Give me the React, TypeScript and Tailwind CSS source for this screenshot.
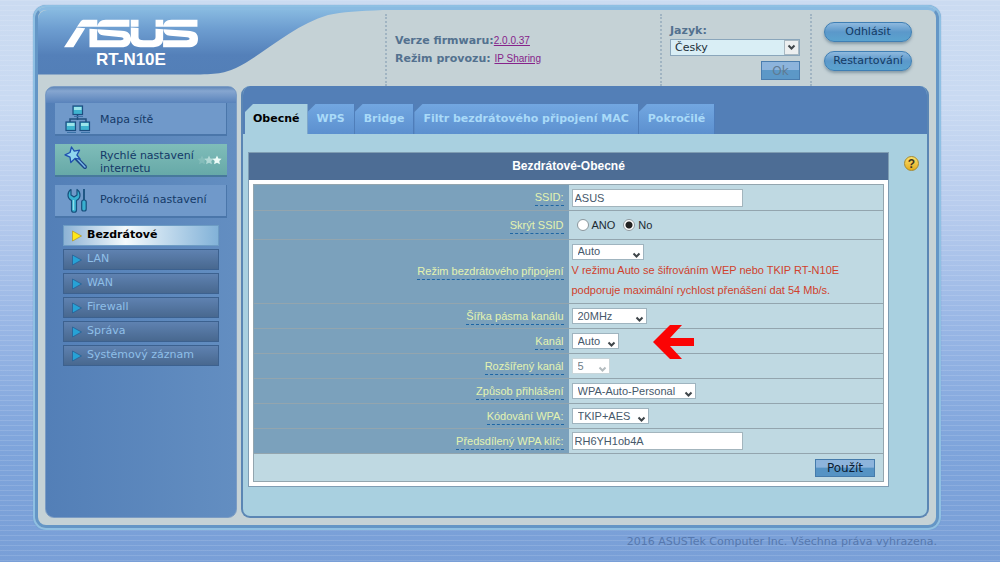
import React, { useState } from "react";
import { SiAsus } from "react-icons/si";

// ─── Data ─────────────────────────────────────────────────────────────────────
const TABS = ["Obecné", "WPS", "Bridge", "Filtr bezdrátového připojení MAC", "Pokročilé"];

const SUBMENU = ["Bezdrátové", "LAN", "WAN", "Firewall", "Správa", "Systémový záznam"];

// ─── Icons ────────────────────────────────────────────────────────────────────
function NetworkIcon() {
  return (
    <svg width="28" height="28" viewBox="0 0 28 28" className="shrink-0" aria-hidden="true">
      <path d="M13.500 10v5M6 18v-4h16v4" fill="none" stroke="#20507f" strokeWidth="1.500" />
      {[[9, 1], [2, 17], [16, 17]].map(([x, y]) => (
        <g key={x}>
          <rect x={x} y={y} width="9.500" height="8.500" fill="#3fb3cf" stroke="#1d4e80" strokeWidth="1.200" />
          <rect x={x + 1} y={y + 1} width="7.500" height="3" fill="#9be4ea" />
          <path d={`M${x + 1} ${y + 10.500}h9`} stroke="#3b73a8" />
        </g>
      ))}
    </svg>
  );
}

function WandIcon() {
  return (
    <svg width="28" height="28" viewBox="0 0 28 28" className="shrink-0" aria-hidden="true">
      <path d="M12 12l9 9" stroke="#1b4588" strokeWidth="4" strokeLinecap="round" />
      <path d="M13 12.500l8 8.500" stroke="#78b9e8" strokeWidth="1.500" strokeLinecap="round" />
      <path
        d="M7.500 1l2.800 4.200 5.200-1-2.600 4.800 3.300 4.200-5.200-.8L6.800 16.500l-.8-5.300L1 8.800 6 6.500z"
        fill="#8fd6ef"
        stroke="#1f50b0"
        strokeWidth="1.300"
        strokeLinejoin="round"
      />
    </svg>
  );
}

function ToolsIcon() {
  return (
    <svg width="28" height="28" viewBox="0 0 28 28" className="shrink-0" aria-hidden="true">
      <path
        d="M7 2.500C4.500 4 4 6 4 8c0 2.500 1.500 4.500 3.500 5.500V23c0 3 5 3 5 0v-9.500C14.500 12.500 16 10.500 16 8c0-2-.8-4-3-5.500V8L10 10 7 8z"
        fill="#38b0d0"
        stroke="#17507d"
        strokeWidth="1.200"
        strokeLinejoin="round"
      />
      <path d="M9.500 13v10" stroke="#90e0ea" strokeWidth="1.400" />
      <path d="M20 2v12" stroke="#17507d" strokeWidth="1.800" />
      <rect x="17.700" y="13" width="4.500" height="11" rx="2" fill="#38b0d0" stroke="#17507d" strokeWidth="1.200" />
    </svg>
  );
}

function Stars() {
  return (
    <svg width="26" height="12" viewBox="0 0 26 12" className="ml-auto shrink-0" aria-hidden="true">
      {[0, 7, 15].map((x, i) => (
        <path
          key={x}
          d={`M${x + 5} 1.500l1.400 2.900 3.200.4-2.300 2.200.6 3.200-2.900-1.500-2.900 1.500.6-3.200L${x + 0.4} 4.800l3.200-.4z`}
          fill="#f2fffb"
          opacity={[0.15, 0.5, 0.95][i]}
        />
      ))}
    </svg>
  );
}

function Chevron({ muted }: { muted?: boolean }) {
  return (
    <svg width="9" height="7" viewBox="0 0 9 7" aria-hidden="true">
      <path
        d="M1.500 1.500l3 3 3-3"
        fill="none"
        stroke={muted ? "#b4bcbf" : "#3f464a"}
        strokeWidth="2"
      />
    </svg>
  );
}

// ─── Form parts ───────────────────────────────────────────────────────────────
interface PickerProps {
  id: string;
  value: string;
  width: string;
  disabled?: boolean;
}

function Picker({ id, value, width, disabled }: PickerProps) {
  return (
    <div className={`relative h-4 ${width}`}>
      <select
        id={id}
        disabled={disabled}
        className="block h-4 w-full appearance-none border border-[#9fb4bf] bg-white pl-[5px] text-[11px] leading-[13px] text-[#46586a] outline-none disabled:border-[#c9d6da] disabled:text-[#6f7d88] disabled:opacity-100"
      >
        <option>{value}</option>
      </select>
      <span className="pointer-events-none absolute right-[3px] bottom-px">
        <Chevron muted={disabled} />
      </span>
    </div>
  );
}

interface RowProps {
  label: string;
  htmlFor?: string;
  height: string;
  children: React.ReactNode;
}

function Row({ label, htmlFor, height, children }: RowProps) {
  return (
    <tr className={`border-b border-[#93a5ae] ${height}`}>
      <th scope="row" className="w-1/2 bg-[#7ba1bc] pr-[5px] text-right align-middle font-normal">
        <label
          htmlFor={htmlFor}
          className="inline-block border-b border-dashed border-[#1f66a3] leading-[15px] text-[#e4f3b0]"
        >
          {label}
        </label>
      </th>
      <td className="bg-[#bfd9e2] pl-[3px] align-middle">{children}</td>
    </tr>
  );
}

// ─── Page sections ────────────────────────────────────────────────────────────
function Header() {
  const pill =
    "block h-5 w-[88px] rounded-full border border-[#3f7fb4] bg-linear-to-b from-[#8fb9de] via-[#5b98ca] to-[#5aa3cf] text-[11px] leading-[16px] text-[#123a63] shadow-[0_2px_3px_rgba(70,100,120,0.5)]";

  return (
    <header className="relative flex h-[76px]">
      <svg
        className="absolute top-0 left-0 rounded-tl-[9px]"
        width="345"
        height="65"
        viewBox="0 0 345 65"
        aria-hidden="true"
      >
        <defs>
          <linearGradient id="swoosh" x1="0" y1="0" x2="0" y2="1">
            <stop offset="0" stopColor="#87b9e0" />
            <stop offset="0.300" stopColor="#6d9dd0" />
            <stop offset="0.700" stopColor="#5480b9" />
            <stop offset="1" stopColor="#537fb7" />
          </linearGradient>
        </defs>
        <path d="M0 0H345C320 1 305 2 290 5C255 15 225 45 198 58C185 64 175 64.500 150 64.500H0z" fill="url(#swoosh)" />
      </svg>
      <div className="relative w-[347px] shrink-0 pt-[9px] pl-[26px] text-white">
        <SiAsus viewBox="0 9.400 24 5.200" preserveAspectRatio="none" className="h-[29px] w-[134px]" />
        <h1 className="ml-8 text-[17px] leading-6 font-bold">RT-N10E</h1>
      </div>
      <div className="mt-1 flex-1 border-l-2 border-dotted border-[#a0b4c2] pt-[18px] pl-2 font-['DejaVu_Sans'] text-[11px] leading-[18px] font-bold text-[#53718f]">
        <p>
          Verze firmwaru:
          <a href="#firmware" className="font-['Liberation_Sans'] text-[10px] font-normal text-[#86228a] underline">
            2.0.0.37
          </a>
        </p>
        <p>
          Režim provozu:{" "}
          <a href="#mode" className="font-['Liberation_Sans'] text-[10px] font-normal text-[#86228a] underline">
            IP Sharing
          </a>
        </p>
      </div>
      <div className="mt-1 w-[150px] shrink-0 border-l-2 border-dotted border-[#a0b4c2] pt-2 pr-[10px] pl-2 font-['DejaVu_Sans']">
        <label htmlFor="lang" className="block text-[11px] leading-[17px] font-bold text-[#53718f]">
          Jazyk:
        </label>
        <div className="relative">
          <select
            id="lang"
            className="block h-[17px] w-full appearance-none border border-[#8aa6bb] bg-[#d9eef5] pl-1 text-[11px] leading-[15px] text-[#1d3038] outline-none"
          >
            <option>Česky</option>
          </select>
          <span className="pointer-events-none absolute top-px right-px flex h-[15px] w-[15px] items-center justify-center border border-[#a9b9c2] bg-[#eceff0]">
            <Chevron />
          </span>
        </div>
        <button
          disabled
          className="mt-[5px] ml-auto block h-[19px] w-[39px] border border-[#4a7dae] bg-linear-to-b from-[#8db4dc] from-45% to-[#5c98c7] to-50% text-[12px] leading-[16px] text-[#5f7b92]"
        >
          Ok
        </button>
      </div>
      <div className="mt-1 w-[126px] shrink-0 space-y-[9px] border-l-2 border-dotted border-[#a0b4c2] pt-2 pl-3 font-['DejaVu_Sans']">
        <button className={pill}>Odhlásit</button>
        <button className={pill}>Restartování</button>
      </div>
    </header>
  );
}

function Sidebar() {
  const [active, setActive] = useState("Bezdrátové");
  const item =
    "flex h-[33px] w-full items-center border-r border-b-2 border-[#4a76aa] bg-[#7099ca] pr-1 pl-[9px] text-left text-[11px] text-[#143968]";

  return (
    <nav className="w-[192px] shrink-0 rounded-[9px] border border-[#7b9cc4] bg-linear-to-r from-[#537fb7] to-[#638ec1] font-['DejaVu_Sans']">
      <div className="h-4 rounded-t-[8px] bg-linear-to-b from-[#6288b9] via-[#86a6d0] via-25% to-[#5983bb]" />
      <div className="mx-[9px] space-y-2">
        <button className={item}>
          <NetworkIcon />
          <span className="ml-2 pt-1">Mapa sítě</span>
        </button>
        <button className="flex h-[33px] w-full items-center border-b-2 border-[#47799c] bg-linear-to-b from-[#7fbdb9] to-[#67a9a8] pr-1 pl-[9px] text-left text-[11px] leading-[13px] text-[#143968]">
          <WandIcon />
          <span className="ml-2 pt-1 whitespace-nowrap">
            Rychlé nastavení
            <br />
            internetu
          </span>
          <Stars />
        </button>
        <button className={item}>
          <ToolsIcon />
          <span className="ml-2 whitespace-nowrap">Pokročilá nastavení</span>
        </button>
      </div>
      <ul className="mx-[17px] mt-[7px] space-y-[3px] pb-4">
        {SUBMENU.map((name) => (
          <li key={name}>
            <button
              onClick={() => setActive(name)}
              className={
                active === name
                  ? "flex h-[21px] w-full items-center border border-[#6d9cc4] bg-linear-to-r from-[#8db3d5] via-[#f4fafc] via-40% to-[#82b2d8] pl-2 text-[11px] font-bold text-black"
                  : "flex h-[21px] w-full items-center border border-[#3c618f] bg-linear-to-b from-[#5f82b1] to-[#48688f] pl-2 text-[11px] text-[#8fbfe8]"
              }
            >
              <svg width="10" height="12" viewBox="0 0 10 12" className="mr-[5px]" aria-hidden="true">
                <path
                  d="M.5 1v10l9-5z"
                  fill={active === name ? "#ffe817" : "#27a2d6"}
                  stroke={active === name ? "#b59a2c" : "#285f94"}
                  strokeWidth="0.800"
                />
              </svg>
              {name}
            </button>
          </li>
        ))}
      </ul>
    </nav>
  );
}

function Tabs() {
  const [tab, setTab] = useState("Obecné");
  return (
    <div role="tablist" className="flex h-12 items-end bg-[#537fb7] pl-[2px] font-['DejaVu_Sans'] text-[11px] font-bold">
      {TABS.map((name) => (
        <button
          key={name}
          role="tab"
          aria-selected={tab === name}
          onClick={() => setTab(name)}
          className={
            tab === name
              ? "h-[30px] bg-[#a9d0e0] px-2 whitespace-nowrap text-black [clip-path:polygon(8px_0,100%_0,100%_100%,0_100%,0_8px)]"
              : "h-[30px] border-r border-[#4e7dba] bg-linear-to-b from-[#72a7e1] to-[#5c90cf] px-[9px] whitespace-nowrap text-[#a9daf8] [clip-path:polygon(8px_0,100%_0,100%_100%,0_100%,0_8px)]"
          }
        >
          {name}
        </button>
      ))}
    </div>
  );
}

function WirelessForm() {
  const field =
    "block h-[18px] w-[171px] border border-[#a3b5bd] bg-white px-[2px] text-[11px] text-[#46586a] outline-none";
  const radio =
    "size-3 appearance-none rounded-full border border-[#8b979d] bg-white checked:bg-[radial-gradient(#222_0_3px,#fff_4px)]";

  return (
    <form
      onSubmit={(e) => e.preventDefault()}
      className="flex-1 border border-[#7f9db3] bg-white text-[11px]"
    >
      <h2 className="h-[27px] bg-[#4d6d95] text-center text-[12px] leading-[27px] font-bold text-white">
        Bezdrátové-Obecné
      </h2>
      <div className="p-1">
        <table className="w-full border-collapse border border-[#93a5ae]">
          <tbody>
            <Row label="SSID:" htmlFor="ssid" height="h-[26px]">
              <input id="ssid" defaultValue="ASUS" className={field} />
            </Row>
            <Row label="Skrýt SSID" height="h-[29px]">
              <div className="flex items-center pl-[5px]">
                <input type="radio" name="hide" id="hide-yes" className={radio} />
                <label htmlFor="hide-yes" className="mr-2 ml-[3px] text-[#1c2a33]">ANO</label>
                <input type="radio" name="hide" id="hide-no" defaultChecked className={radio} />
                <label htmlFor="hide-no" className="ml-[3px] text-[#1c2a33]">No</label>
              </div>
            </Row>
            <Row label="Režim bezdrátového připojení" htmlFor="mode" height="h-16">
              <Picker id="mode" value="Auto" width="w-[72px]" />
              <p className="leading-5 text-[#d0412c]">
                V režimu Auto se šifrováním WEP nebo TKIP RT-N10E
                <br />
                podporuje maximální rychlost přenášení dat 54 Mb/s.
              </p>
            </Row>
            <Row label="Šířka pásma kanálu" htmlFor="width" height="h-[25px]">
              <Picker id="width" value="20MHz" width="w-[75px]" />
            </Row>
            <Row label="Kanál" htmlFor="channel" height="h-[25px]">
              <div className="relative">
                <Picker id="channel" value="Auto" width="w-[47px]" />
                <svg
                  className="absolute -top-2 left-[81px]"
                  width="41"
                  height="34"
                  viewBox="0 0 41 34"
                  aria-hidden="true"
                >
                  <path d="M0 17L17 0H29L17 13H41V21H17L29 34H17z" fill="#fb0404" />
                </svg>
              </div>
            </Row>
            <Row label="Rozšířený kanál" htmlFor="ext" height="h-[25px]">
              <Picker id="ext" value="5" width="w-[38px]" disabled />
            </Row>
            <Row label="Způsob přihlášení" htmlFor="auth" height="h-[25px]">
              <Picker id="auth" value="WPA-Auto-Personal" width="w-[124px]" />
            </Row>
            <Row label="Kódování WPA:" htmlFor="crypto" height="h-[25px]">
              <Picker id="crypto" value="TKIP+AES" width="w-[77px]" />
            </Row>
            <Row label="Předsdílený WPA klíč:" htmlFor="psk" height="h-[25px]">
              <input id="psk" defaultValue="RH6YH1ob4A" className={field} />
            </Row>
            <tr className="h-7">
              <td colSpan={2} className="bg-[#bfd9e2] pr-2">
                <button className="ml-auto block h-[18px] w-[60px] border border-[#457bab] bg-linear-to-b from-[#8db4dc] from-45% to-[#5593c4] to-50% font-['DejaVu_Sans'] text-[12px] leading-4 text-[#0b1d33]">
                  Použít
                </button>
              </td>
            </tr>
          </tbody>
        </table>
      </div>
    </form>
  );
}

export default function App() {
  return (
    <div className="min-h-screen bg-[repeating-linear-gradient(to_bottom,rgba(255,255,255,0.12)_0_1px,transparent_1px_5px),linear-gradient(to_bottom,#cbdbf1_0%,#c9daf2_18%,#b9cdee_36%,#98b6e5_58%,#7ea4db_80%,#799fd7_100%)] pt-[5px] pr-[59px] pl-[33px] font-['Liberation_Sans',sans-serif]">
      <div className="rounded-[13px] border-2 border-[#8fc0e3] bg-[#c5d2d6] shadow-[0_0_1px_#5f90bf]">
        <div className="rounded-[11px] border-3 border-[#6496c6] border-t-[#8abbe2]">
          <Header />
          <div className="flex gap-1 px-[7px] pb-[7px]">
            <Sidebar />
            <main className="min-w-0 flex-1 overflow-hidden rounded-[9px] border-2 border-t-0 border-[#5b86b4] bg-[#a9d0e0]">
              <Tabs />
              <div className="flex items-start pt-[18px] pr-2 pb-[29px] pl-[5px]">
                <WirelessForm />
                <button
                  aria-label="Nápověda"
                  className="mt-1 ml-[15px] size-[15px] rounded-full border border-[#a88a2c] bg-linear-to-b from-[#f9e06a] to-[#e5ac10] text-[12px] leading-[12px] font-bold text-[#3c3420]"
                >
                  ?
                </button>
              </div>
            </main>
          </div>
        </div>
      </div>
      <footer className="py-1 pr-1 text-right font-['DejaVu_Sans'] text-[11px] leading-[15px] text-[#5678ae]">
        2016 ASUSTek Computer Inc. Všechna práva vyhrazena.
      </footer>
    </div>
  );
}
